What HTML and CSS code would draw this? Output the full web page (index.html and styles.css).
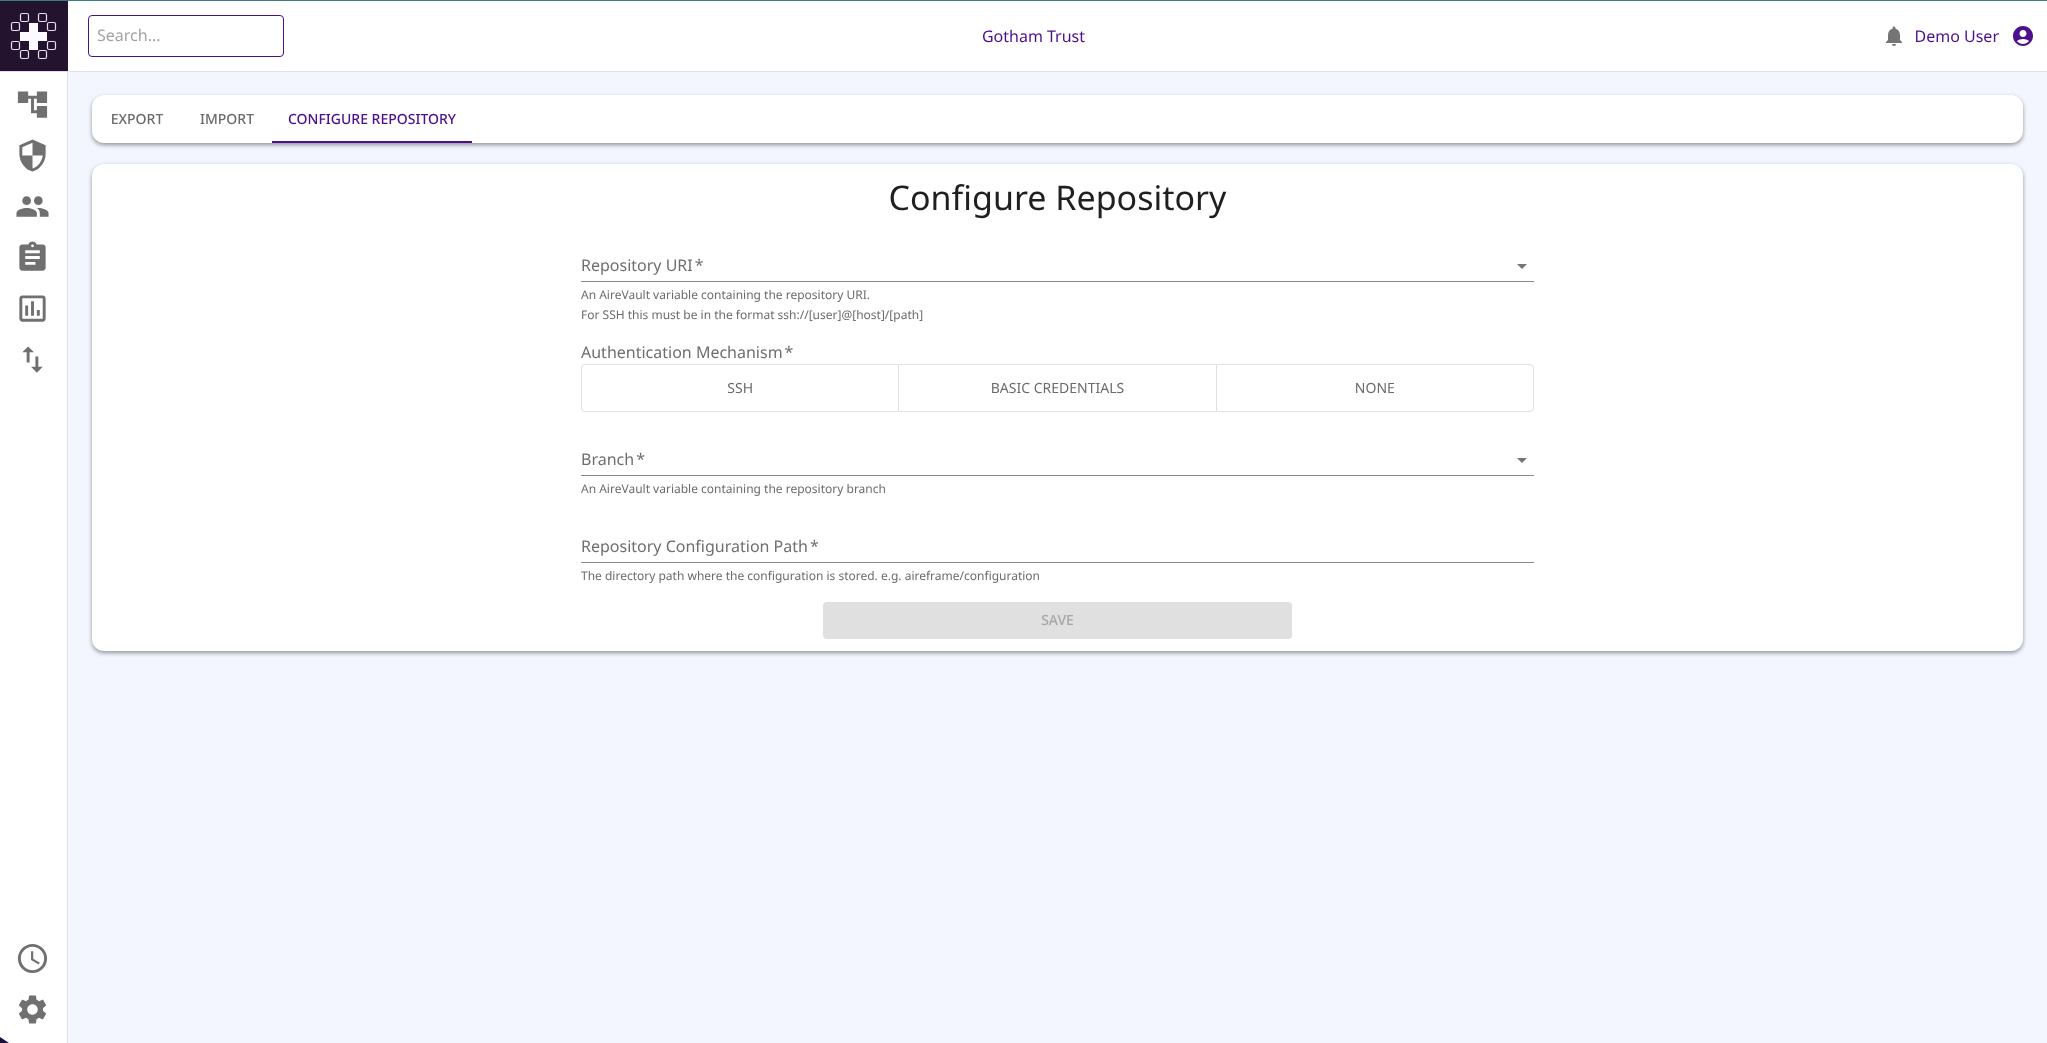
FILE: index.html
```html
<!DOCTYPE html>
<html lang="en">
<head>
    <meta charset="UTF-8">
    <meta name="viewport" content="width=device-width, initial-scale=1.0">
    <title>Configure Repository</title>
    <link rel="stylesheet" href="styles.css">
</head>
<body>
    <header class="topbar">
        <div class="topbar-left">
            <div class="logo">
                <svg width="68" height="70" viewBox="0 1 68 70">
                    <g class="logo-squares">
                        <rect x="20.5" y="13.5" width="8" height="8" rx="1.5"/>
                        <rect x="38.5" y="13.5" width="8" height="8" rx="1.5"/>
                        <rect x="11.5" y="22.5" width="8" height="8" rx="1.5"/>
                        <rect x="47.5" y="22.5" width="8" height="8" rx="1.5"/>
                        <rect x="11.5" y="41.5" width="8" height="8" rx="1.5"/>
                        <rect x="47.5" y="41.5" width="8" height="8" rx="1.5"/>
                        <rect x="20.5" y="50.5" width="8" height="8" rx="1.5"/>
                        <rect x="38.5" y="50.5" width="8" height="8" rx="1.5"/>
                    </g>
                    <path class="logo-cross" d="M29 23h9v9h9v9h-9v9h-9v-9h-9v-9h9z"/>
                </svg>
            </div>
            <input class="search" type="text" placeholder="Search...">
        </div>
        <div class="org-name">Gotham Trust</div>
        <div class="topbar-right">
            <svg class="bell" width="24" height="24" viewBox="0 0 24 24"><path d="M12 22c1.1 0 2-.9 2-2h-4c0 1.1.89 2 2 2zm6-6v-5c0-3.07-1.64-5.64-4.5-6.32V4c0-.83-.67-1.5-1.5-1.5s-1.5.67-1.5 1.5v.68C7.63 5.36 6 7.92 6 11v5l-2 2v1h16v-1l-2-2z"/></svg>
            <span class="user-name">Demo User</span>
            <svg class="avatar" width="24" height="24" viewBox="0 0 24 24"><path d="M12 2C6.48 2 2 6.48 2 12s4.48 10 10 10 10-4.48 10-10S17.52 2 12 2zm0 4c1.93 0 3.5 1.57 3.5 3.5S13.93 13 12 13s-3.5-1.57-3.5-3.5S10.07 6 12 6zm0 14c-2.03 0-4.43-.82-6.14-2.88C7.55 15.8 9.68 15 12 15s4.45.8 6.14 2.12C16.43 19.18 14.03 20 12 20z"/></svg>
        </div>
    </header>

    <div class="layout">
        <nav class="sidebar">
            <a class="nav-item"><svg viewBox="0 0 24 24"><path d="M22 11V3h-7v3H9V3H2v8h7V8h2v10h4v3h7v-8h-7v3h-2V8h2v3z"/></svg></a>
            <a class="nav-item"><svg viewBox="0 0 24 24"><path d="M12 1L3 5v6c0 5.55 3.84 10.74 9 12 5.16-1.26 9-6.45 9-12V5l-9-4zm0 10.99h7c-.53 4.12-3.28 7.79-7 8.94V12H5V6.3l7-3.11v8.8z"/></svg></a>
            <a class="nav-item"><svg viewBox="0 0 24 24"><path d="M16 11c1.66 0 2.99-1.34 2.99-3S17.66 5 16 5c-1.66 0-3 1.34-3 3s1.34 3 3 3zm-8 0c1.66 0 2.99-1.34 2.99-3S9.66 5 8 5C6.34 5 5 6.34 5 8s1.34 3 3 3zm0 2c-2.33 0-7 1.17-7 3.5V19h14v-2.5c0-2.33-4.67-3.5-7-3.5zm8 0c-.29 0-.62.02-.97.05 1.16.84 1.97 1.97 1.97 3.45V19h6v-2.5c0-2.33-4.67-3.5-7-3.5z"/></svg></a>
            <a class="nav-item"><svg viewBox="0 0 24 24"><path d="M19 3h-4.18C14.4 1.84 13.3 1 12 1c-1.3 0-2.4.84-2.82 2H5c-1.1 0-2 .9-2 2v14c0 1.1.9 2 2 2h14c1.1 0 2-.9 2-2V5c0-1.1-.9-2-2-2zm-7 0c.55 0 1 .45 1 1s-.45 1-1 1-1-.45-1-1 .45-1 1-1zm2 14H7v-2h7v2zm3-4H7v-2h10v2zm0-4H7V7h10v2z"/></svg></a>
            <a class="nav-item"><svg viewBox="0 0 24 24"><path d="M19 3H5c-1.1 0-2 .9-2 2v14c0 1.1.9 2 2 2h14c1.1 0 2-.9 2-2V5c0-1.1-.9-2-2-2zm0 16H5V5h14v14zM7 10h2v7H7zm4-3h2v10h-2zm4 6h2v4h-2z"/></svg></a>
            <a class="nav-item"><svg viewBox="0 0 24 24"><path d="M9 3L5 6.99h3V14h2V6.99h3L9 3zm7 14.01V10h-2v7.01h-3L15 21l4-3.99h-3z"/></svg></a>
            <div class="nav-spacer"></div>
            <a class="nav-item"><svg viewBox="0 0 24 24"><path d="M11.99 2C6.47 2 2 6.48 2 12s4.47 10 9.99 10C17.52 22 22 17.52 22 12S17.52 2 11.99 2zM12 20c-4.42 0-8-3.58-8-8s3.58-8 8-8 8 3.58 8 8-3.58 8-8 8zm.5-13H11v6l5.25 3.15.75-1.23-4.5-2.67z"/></svg></a>
            <a class="nav-item"><svg viewBox="0 0 24 24"><path d="M19.14 12.94c.04-.3.06-.61.06-.94 0-.32-.02-.64-.07-.94l2.03-1.58c.18-.14.23-.41.12-.61l-1.92-3.32c-.12-.22-.37-.29-.59-.22l-2.39.96c-.5-.38-1.03-.7-1.62-.94l-.36-2.54c-.04-.24-.24-.41-.48-.41h-3.84c-.24 0-.43.17-.47.41l-.36 2.54c-.59.24-1.13.57-1.62.94l-2.39-.96c-.22-.08-.47 0-.59.22L2.74 8.87c-.12.21-.08.47.12.61l2.03 1.58c-.05.3-.09.63-.09.94s.02.64.07.94l-2.03 1.58c-.18.14-.23.41-.12.61l1.92 3.32c.12.22.37.29.59.22l2.39-.96c.5.38 1.03.7 1.62.94l.36 2.54c.05.24.24.41.48.41h3.84c.24 0 .44-.17.47-.41l.36-2.54c.59-.24 1.13-.56 1.62-.94l2.39.96c.22.08.47 0 .59-.22l1.92-3.32c.12-.22.07-.47-.12-.61l-2.01-1.58zM12 15.6c-1.98 0-3.6-1.62-3.6-3.6s1.62-3.6 3.6-3.6 3.6 1.62 3.6 3.6-1.62 3.6-3.6 3.6z"/></svg></a>
        </nav>

        <main class="content">
            <div class="tabs">
                <a class="tab">EXPORT</a>
                <a class="tab">IMPORT</a>
                <a class="tab tab-active">CONFIGURE REPOSITORY</a>
            </div>

            <section class="card">
                <h1 class="card-title">Configure Repository</h1>
                <form class="repo-form">
                    <div class="field field-uri">
                        <div class="field-input">
                            <span class="field-label">Repository URI<span class="req">*</span></span>
                            <span class="caret"></span>
                        </div>
                        <p class="hint">An AireVault variable containing the repository URI.<br>For SSH this must be in the format ssh://[user]@[host]/[path]</p>
                    </div>

                    <div class="auth">
                        <div class="auth-label">Authentication Mechanism<span class="req">*</span></div>
                        <div class="toggle-group">
                            <button class="toggle" type="button">SSH</button>
                            <button class="toggle" type="button">BASIC CREDENTIALS</button>
                            <button class="toggle" type="button">NONE</button>
                        </div>
                    </div>

                    <div class="field field-branch">
                        <div class="field-input">
                            <span class="field-label">Branch<span class="req">*</span></span>
                            <span class="caret"></span>
                        </div>
                        <p class="hint">An AireVault variable containing the repository branch</p>
                    </div>

                    <div class="field field-path">
                        <div class="field-input">
                            <span class="field-label">Repository Configuration Path<span class="req">*</span></span>
                        </div>
                        <p class="hint">The directory path where the configuration is stored. e.g. aireframe/configuration</p>
                    </div>

                    <button class="save" type="button" disabled>SAVE</button>
                </form>
            </section>
        </main>
    </div>
    <div class="corner-mark"></div>
</body>
</html>
```

FILE: styles.css
```css
* {
    box-sizing: border-box;
}
html, body {
    height: 100%;
}
body {
    margin: 0;
    display: flex;
    flex-direction: column;
    font-family: "Noto Sans", sans-serif;
    text-rendering: geometricPrecision;
    background-color: #f3f6fe;
    color: rgba(0, 0, 0, 0.87);
    overflow: hidden;
}

/* top bar */
.topbar {
    flex: none;
    height: 72px;
    display: grid;
    grid-template-columns: 1fr auto 1fr;
    align-items: center;
    background-color: #fff;
    border-top: 1px solid #3a7f80;
    border-bottom: 1px solid #dfe1e8;
    will-change: transform;
}
.topbar-left {
    display: flex;
    align-items: center;
}
.logo {
    flex: none;
    width: 68px;
    height: 70px;
    background-color: #24132f;
    display: flex;
}
.logo-squares rect {
    fill: none;
    stroke: #e6dff0;
    stroke-width: 1.2;
}
.logo-cross {
    fill: #fcfaff;
}
.search {
    display: block;
    width: 196px;
    height: 42px;
    margin-left: 20px;
    padding: 0 8px 2px;
    font: 16px "Noto Sans", sans-serif;
    text-rendering: geometricPrecision;
    border: 1px solid #4d0f8c;
    border-radius: 4px;
    outline: none;
}
.search::placeholder {
    color: #a3a3a3;
}
.org-name, .user-name {
    font-size: 16px;
    color: #4d0f8c;
}
.org-name {
    margin-left: 20px;
}
.topbar-right {
    display: flex;
    align-items: center;
    justify-content: flex-end;
    padding-right: 12px;
}
.bell {
    fill: #757575;
    margin-right: 9px;
}
.user-name {
    margin-right: 12px;
}
.avatar {
    fill: #4d0f8c;
}

/* sidebar */
.layout {
    flex: 1;
    display: flex;
    min-height: 0;
    will-change: transform;
}
.sidebar {
    flex: none;
    width: 68px;
    display: flex;
    flex-direction: column;
    padding: 7px 2px 8px 0;
    background-color: #fff;
    border-right: 1px solid #dfe1e8;
}
.nav-item {
    height: 51px;
    display: flex;
    align-items: center;
    justify-content: center;
}
.nav-item svg {
    width: 35px;
    height: 35px;
    fill: #707070;
}
.nav-spacer {
    flex: 1;
}
.corner-mark {
    position: absolute;
    left: 0;
    bottom: 0;
    width: 9px;
    height: 6px;
    background-color: #1a0d3a;
    clip-path: polygon(0 0, 100% 100%, 0 100%);
}

/* tabs */
.content {
    flex: 1;
    min-width: 0;
    padding: 23px 24px 0 24px;
}
.tabs {
    display: flex;
    height: 48px;
    background-color: #fff;
    border-radius: 12px;
    box-shadow: 0 2px 4px rgba(0, 0, 0, 0.4);
    margin-bottom: 21px;
}
.tab {
    min-width: 90px;
    height: 48px;
    padding: 2px 16px 0;
    display: flex;
    align-items: center;
    justify-content: center;
    font-size: 14px;
    font-weight: 500;
    color: #6b6b6b;
    border-bottom: 2px solid transparent;
}
.tab-active {
    color: #4d0f8c;
    border-bottom-color: #4d0f8c;
}

/* card */
.card {
    height: 487px;
    padding-top: 8px;
    background-color: #fff;
    border-radius: 12px;
    box-shadow: 0 2px 4px rgba(0, 0, 0, 0.4);
}
.card-title {
    margin: 0;
    height: 50px;
    line-height: 50px;
    text-align: center;
    font-size: 34px;
    font-weight: 400;
    color: #1f1f1f;
}
.repo-form {
    width: 953px;
    margin: 0 auto;
}
.field-input {
    height: 35px;
    display: flex;
    align-items: center;
    justify-content: space-between;
    padding: 2px 5px 0 0;
    border-bottom: 1px solid #8a8a8a;
}
.field-label, .auth-label {
    font-size: 16px;
    line-height: 22px;
    color: #6e6e6e;
}
.req {
    margin-left: 2px;
}
.caret {
    width: 0;
    height: 0;
    border-left: 5px solid transparent;
    border-right: 5px solid transparent;
    border-top: 5px solid #757575;
    margin: 2px 2px 0 0;
}
.hint {
    margin: 0;
    padding-top: 3px;
    font-size: 12px;
    line-height: 20px;
    color: #6b6b6b;
}
.field-uri {
    padding-top: 25px;
}
.auth {
    padding-top: 16px;
}
.toggle-group {
    display: flex;
    height: 48px;
    margin-top: 1px;
    border: 1px solid #e0e0e0;
    border-radius: 4px;
}
.toggle {
    flex: 1;
    padding: 0;
    border: none;
    border-left: 1px solid #e0e0e0;
    background: none;
    font: 14px "Noto Sans", sans-serif;
    text-rendering: geometricPrecision;
    color: #6b6b6b;
}
.toggle:first-child {
    border-left: none;
}
.field-branch, .field-path {
    padding-top: 29px;
}
.save {
    display: block;
    width: 469px;
    height: 37px;
    margin: 16px auto 0;
    padding: 0;
    border: none;
    border-radius: 4px;
    background-color: #e0e0e0;
    font: 500 14px "Noto Sans", sans-serif;
    text-rendering: geometricPrecision;
    color: #a6a6a6;
}
```
